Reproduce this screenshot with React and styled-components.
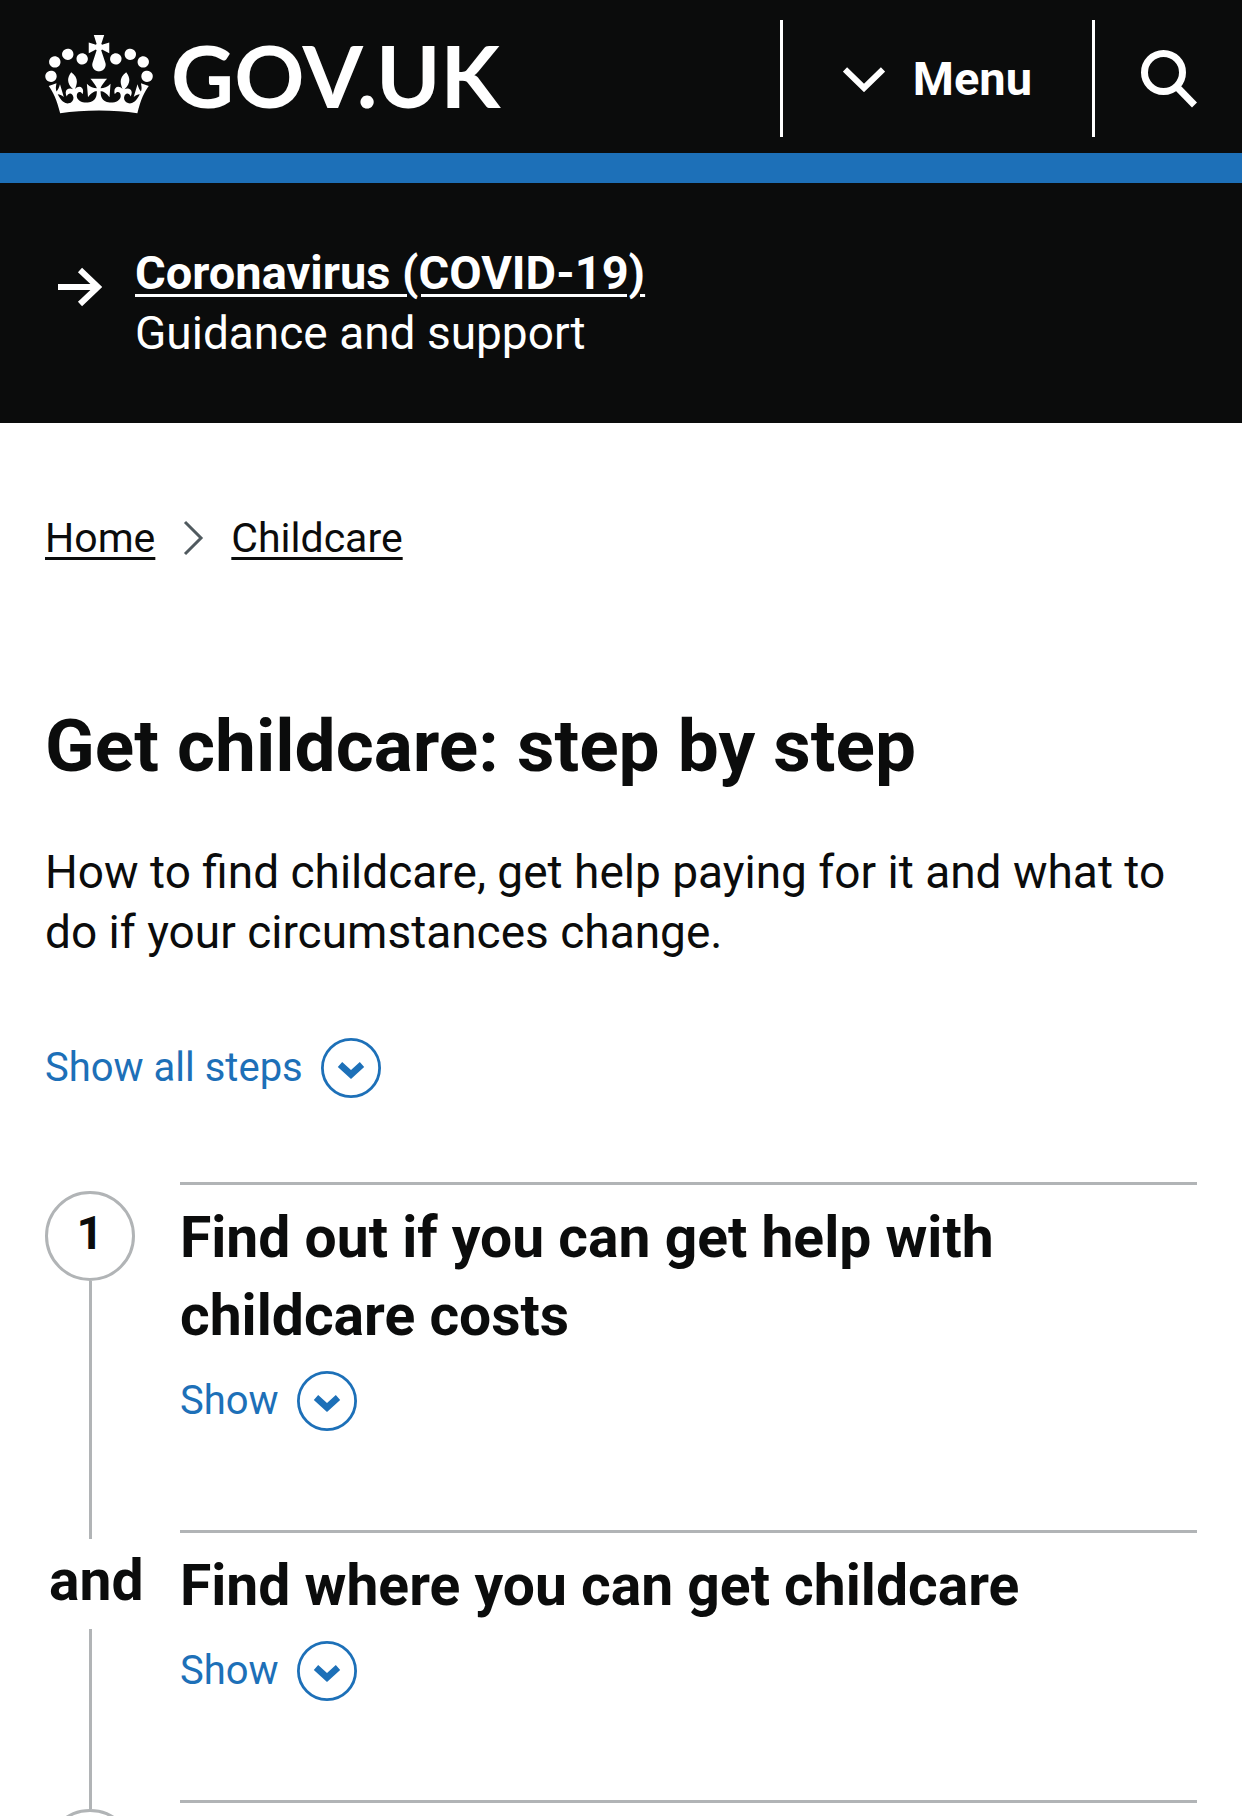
import React, { useState } from "react";
import styled, { createGlobalStyle } from "styled-components";

const ink = "#0b0c0c";
const blue = "#1d70b8";
const grey = "#b1b4b6";

const GlobalStyle = createGlobalStyle`
  *, *::before, *::after { box-sizing: border-box; }
  body {
    margin: 0;
    background: #fff;
    color: ${ink};
    font-family: Roboto, "Liberation Sans", sans-serif;
    font-size: 46px;
    line-height: 60px;
  }
  h1, h2, p, ol { margin: 0; padding: 0; }
  button { font: inherit; color: inherit; background: none; border: 0; padding: 0; cursor: pointer; }
`;

const Header = styled.header`
  display: flex;
  align-items: flex-start;
  justify-content: space-between;
  padding: 20px 45px 16px;
  background: ${ink};
  color: #fff;
`;

const Logo = styled.a`
  display: flex;
  align-items: center;
  gap: 18px;
  color: inherit;
  font-family: Lato, Roboto, sans-serif;
  font-size: 87px;
  line-height: 109px;
  font-weight: 700;
  text-decoration: none;
`;

const HeaderActions = styled.div`
  display: flex;
  height: 117px;
`;

const MenuButton = styled.button`
  display: flex;
  align-items: center;
  gap: 28px;
  padding: 0 60px;
  border-left: 3px solid #fff;
  border-right: 3px solid #fff;
  font-size: 47px;
  font-weight: 700;
`;

const SearchButton = styled.button`
  display: flex;
  align-items: center;
  padding-left: 46px;
`;

const Promo = styled.section`
  display: flex;
  align-items: flex-start;
  gap: 33px;
  padding: 60px 45px 60px 57px;
  border-top: 30px solid ${blue};
  background: ${ink};
  color: #fff;

  svg { margin-top: 24px; }
`;

const PromoLink = styled.a`
  color: inherit;
  font-size: 47px;
  font-weight: 700;
  text-decoration: underline;
  text-decoration-thickness: 3px;
  text-underline-offset: 5px;
`;

const Main = styled.main`
  padding: 85px 45px 0;
`;

const Breadcrumbs = styled.nav`
  display: flex;
  align-items: center;
  gap: 27px;
  font-size: 41px;

  a {
    color: inherit;
    text-decoration-thickness: 3px;
    text-underline-offset: 5px;
  }
`;

const Title = styled.h1`
  margin-top: 141px;
  font-size: 73px;
  line-height: 75px;
  font-weight: 700;
`;

const Lead = styled.p`
  margin: 58px 0 76px;
`;

const Toggle = styled.button`
  display: flex;
  align-items: center;
  gap: 18px;
  color: ${blue};
  font-size: 40px;
`;

const Steps = styled.ol`
  margin-top: 84px;
  list-style: none;
`;

const Step = styled.li`
  display: grid;
  grid-template-columns: 90px 1fr;
  column-gap: 45px;
`;

const Rail = styled.div`
  display: flex;
  flex-direction: column;
  align-items: center;
  padding-top: 9px;
`;

const Marker = styled.span`
  width: 90px;
  height: 90px;
  border: ${(p) => (p.$ring ? `3px solid ${grey}` : "0")};
  border-radius: 50%;
  padding: ${(p) => (p.$ring ? "0" : "3px 0 0 4px")};
  font-size: ${(p) => (p.$ring ? "47px" : "57px")};
  line-height: 78px;
  font-weight: 700;
  text-align: center;
`;

const Connector = styled.span`
  flex: 1;
  width: 3px;
  margin-bottom: -9px;
  background: ${grey};
`;

const StepBody = styled.div`
  padding: 14px 0 99px;
  border-top: 3px solid ${grey};
`;

const StepTitle = styled.h2`
  margin-bottom: 16px;
  font-size: 57px;
  line-height: 78px;
  font-weight: 700;
`;

const Crown = () => (
  <svg width="108" height="79" viewBox="0 0 132 97" fill="currentColor" aria-hidden="true">
    <path d="M25 30.2c3.5 1.5 7.7-.2 9.1-3.7 1.5-3.6-.2-7.8-3.9-9.2-3.6-1.4-7.6.3-9.1 3.9-1.4 3.5.3 7.5 3.9 9zM9 39.5c3.6 1.5 7.8-.2 9.2-3.7 1.5-3.6-.2-7.8-3.9-9.1-3.6-1.5-7.6.2-9.1 3.8-1.4 3.5.3 7.5 3.8 9zM4.4 57.2c3.5 1.5 7.7-.2 9.1-3.8 1.5-3.6-.2-7.7-3.9-9.1-3.5-1.5-7.6.3-9.1 3.8-1.4 3.5.3 7.6 3.9 9.1zm38.3-21.4c3.5 1.5 7.7-.2 9.1-3.8 1.5-3.6-.2-7.7-3.9-9.1-3.6-1.5-7.6.3-9.1 3.8-1.3 3.6.4 7.7 3.9 9.1zm64.4-5.6c-3.6 1.5-7.8-.2-9.1-3.7-1.5-3.6.2-7.8 3.8-9.2 3.6-1.4 7.7.3 9.2 3.9 1.3 3.5-.4 7.5-3.9 9zm15.9 9.3c-3.6 1.5-7.7-.2-9.1-3.7-1.5-3.6.2-7.8 3.7-9.1 3.6-1.5 7.7.2 9.2 3.8 1.5 3.5-.3 7.5-3.8 9zm4.7 17.7c-3.6 1.5-7.8-.2-9.2-3.8-1.5-3.6.2-7.7 3.9-9.1 3.6-1.5 7.7.3 9.2 3.8 1.3 3.5-.4 7.6-3.9 9.1zM89.3 35.8c-3.6 1.5-7.8-.2-9.2-3.8-1.4-3.6.2-7.7 3.9-9.1 3.6-1.5 7.7.3 9.2 3.8 1.4 3.6-.3 7.7-3.9 9.1zM69.7 17.7l8.9 4.7V9.3l-8.9 2.8c-.2-.3-.5-.6-.9-.9L72.4 0H59.6l3.5 11.2c-.3.3-.6.5-.9.9l-8.8-2.8v13.1l8.8-4.7c.3.3.6.7.9.9l-5 15.4v.1c-.2.8-.4 1.6-.4 2.4 0 4.1 3.1 7.5 7 8.1h.2c.3 0 .7.1 1 .1.4 0 .7 0 1-.1h.2c4-.6 7.1-4.1 7.1-8.1 0-.8-.1-1.7-.4-2.4V34l-5.1-15.4c.4-.2.7-.6 1-.9zM66 92.8c16.9 0 32.8 1.1 47.1 3.2 4-16.9 8.9-26.7 14-33.5l-9.6-3.4c1 4.9 1.1 7.2 0 10.2-1.5-1.4-3-4.3-4.2-8.7L108.6 76c2.8-2 5-3.2 7.5-3.3-4.4 9.4-10 11.9-13.6 11.2-4.3-.8-6.3-4.6-5.6-7.9 1-4.7 5.7-5.9 8-.5 4.3-8.7-3-11.4-7.6-8.8 7.1-7.2 7.9-13.5 2.1-21.1-8 6.1-8.1 12.3-4.5 20.8-4.7-5.4-12.1-2.5-9.5 6.2 3.4-5.2 7.9-2 7.2 3.1-.6 4.3-6.4 7.8-13.5 7.2-10.3-.9-10.9-8-11.2-13.8 2.5-.5 7.1 1.8 11 7.3L80.2 60c-4.1 4.4-8 5.3-12.3 5.4 1.4-4.4 8-11.6 8-11.6H55.5s6.4 7.2 7.9 11.6c-4.2-.1-8-1-12.3-5.4l1.4 16.4c3.9-5.5 8.5-7.7 10.9-7.3-.3 5.8-.9 12.8-11.1 13.8-7.2.6-12.9-2.9-13.5-7.2-.7-5 3.8-8.3 7.1-3.1 2.7-8.7-4.6-11.6-9.4-6.2 3.7-8.5 3.6-14.7-4.6-20.8-5.8 7.6-5 13.9 2.2 21.1-4.7-2.6-11.9.1-7.7 8.8 2.3-5.5 7.1-4.2 8.1.5.7 3.3-1.3 7.1-5.7 7.9-3.5.7-9-1.8-13.5-11.2 2.5.1 4.7 1.3 7.5 3.3l-4.7-15.4c-1.2 4.4-2.7 7.2-4.3 8.7-1.1-3-.9-5.3 0-10.2l-9.5 3.4c5 6.9 9.9 16.7 14 33.5 14.8-2.1 30.8-3.2 47.7-3.2z" />
  </svg>
);

const MenuChevron = () => (
  <svg width="42" height="26" viewBox="0 0 42 26" fill="none" stroke="currentColor" strokeWidth="6" aria-hidden="true">
    <path d="M2 3.5L21 22L40 3.5" />
  </svg>
);

const SearchIcon = () => (
  <svg width="56" height="58" viewBox="0 0 56 58" fill="none" stroke="currentColor" strokeWidth="7" aria-hidden="true">
    <circle cx="22.5" cy="22.5" r="19" />
    <path d="M36 37L53.5 55" />
  </svg>
);

const ArrowIcon = () => (
  <svg width="45" height="40" viewBox="0 0 45 40" fill="none" stroke="currentColor" strokeWidth="6" aria-hidden="true">
    <path d="M1 20H40M23 3L41 20L23 37" />
  </svg>
);

const CrumbChevron = () => (
  <svg width="22" height="36" viewBox="0 0 22 36" fill="none" stroke="#505a5f" strokeWidth="3" aria-hidden="true">
    <path d="M3 2L19 18L3 34" />
  </svg>
);

const RoundChevron = () => (
  <svg width="60" height="60" viewBox="0 0 60 60" fill="none" stroke="currentColor" aria-hidden="true">
    <circle cx="30" cy="30" r="28.6" strokeWidth="2.8" />
    <path d="M19 26.5L30 36.5L41 26.5" strokeWidth="6.5" />
  </svg>
);

const steps = [
  { marker: "1", ring: true, title: "Find out if you can get help with childcare costs" },
  { marker: "and", ring: false, title: "Find where you can get childcare" },
];

export default function App() {
  const [allOpen, setAllOpen] = useState(false);
  return (
    <>
      <GlobalStyle />
      <Header>
        <Logo href="#">
          <Crown />
          GOV.UK
        </Logo>
        <HeaderActions>
          <MenuButton type="button">
            <MenuChevron />
            Menu
          </MenuButton>
          <SearchButton type="button" aria-label="Search">
            <SearchIcon />
          </SearchButton>
        </HeaderActions>
      </Header>
      <Promo>
        <ArrowIcon />
        <div>
          <PromoLink href="#">Coronavirus (COVID-19)</PromoLink>
          <p>Guidance and support</p>
        </div>
      </Promo>
      <Main>
        <Breadcrumbs aria-label="Breadcrumb">
          <a href="#">Home</a>
          <CrumbChevron />
          <a href="#">Childcare</a>
        </Breadcrumbs>
        <Title>Get childcare: step by step</Title>
        <Lead>
          How to find childcare, get help paying for it and what to do if your circumstances change.
        </Lead>
        <Toggle type="button" aria-expanded={allOpen} onClick={() => setAllOpen(!allOpen)}>
          Show all steps
          <RoundChevron />
        </Toggle>
        <Steps>
          {steps.map((step) => (
            <Step key={step.title}>
              <Rail>
                <Marker $ring={step.ring}>{step.marker}</Marker>
                <Connector />
              </Rail>
              <StepBody>
                <StepTitle>{step.title}</StepTitle>
                <Toggle type="button">
                  Show
                  <RoundChevron />
                </Toggle>
              </StepBody>
            </Step>
          ))}
          <Step>
            <Rail>
              <Marker $ring />
            </Rail>
            <StepBody />
          </Step>
        </Steps>
      </Main>
    </>
  );
}
